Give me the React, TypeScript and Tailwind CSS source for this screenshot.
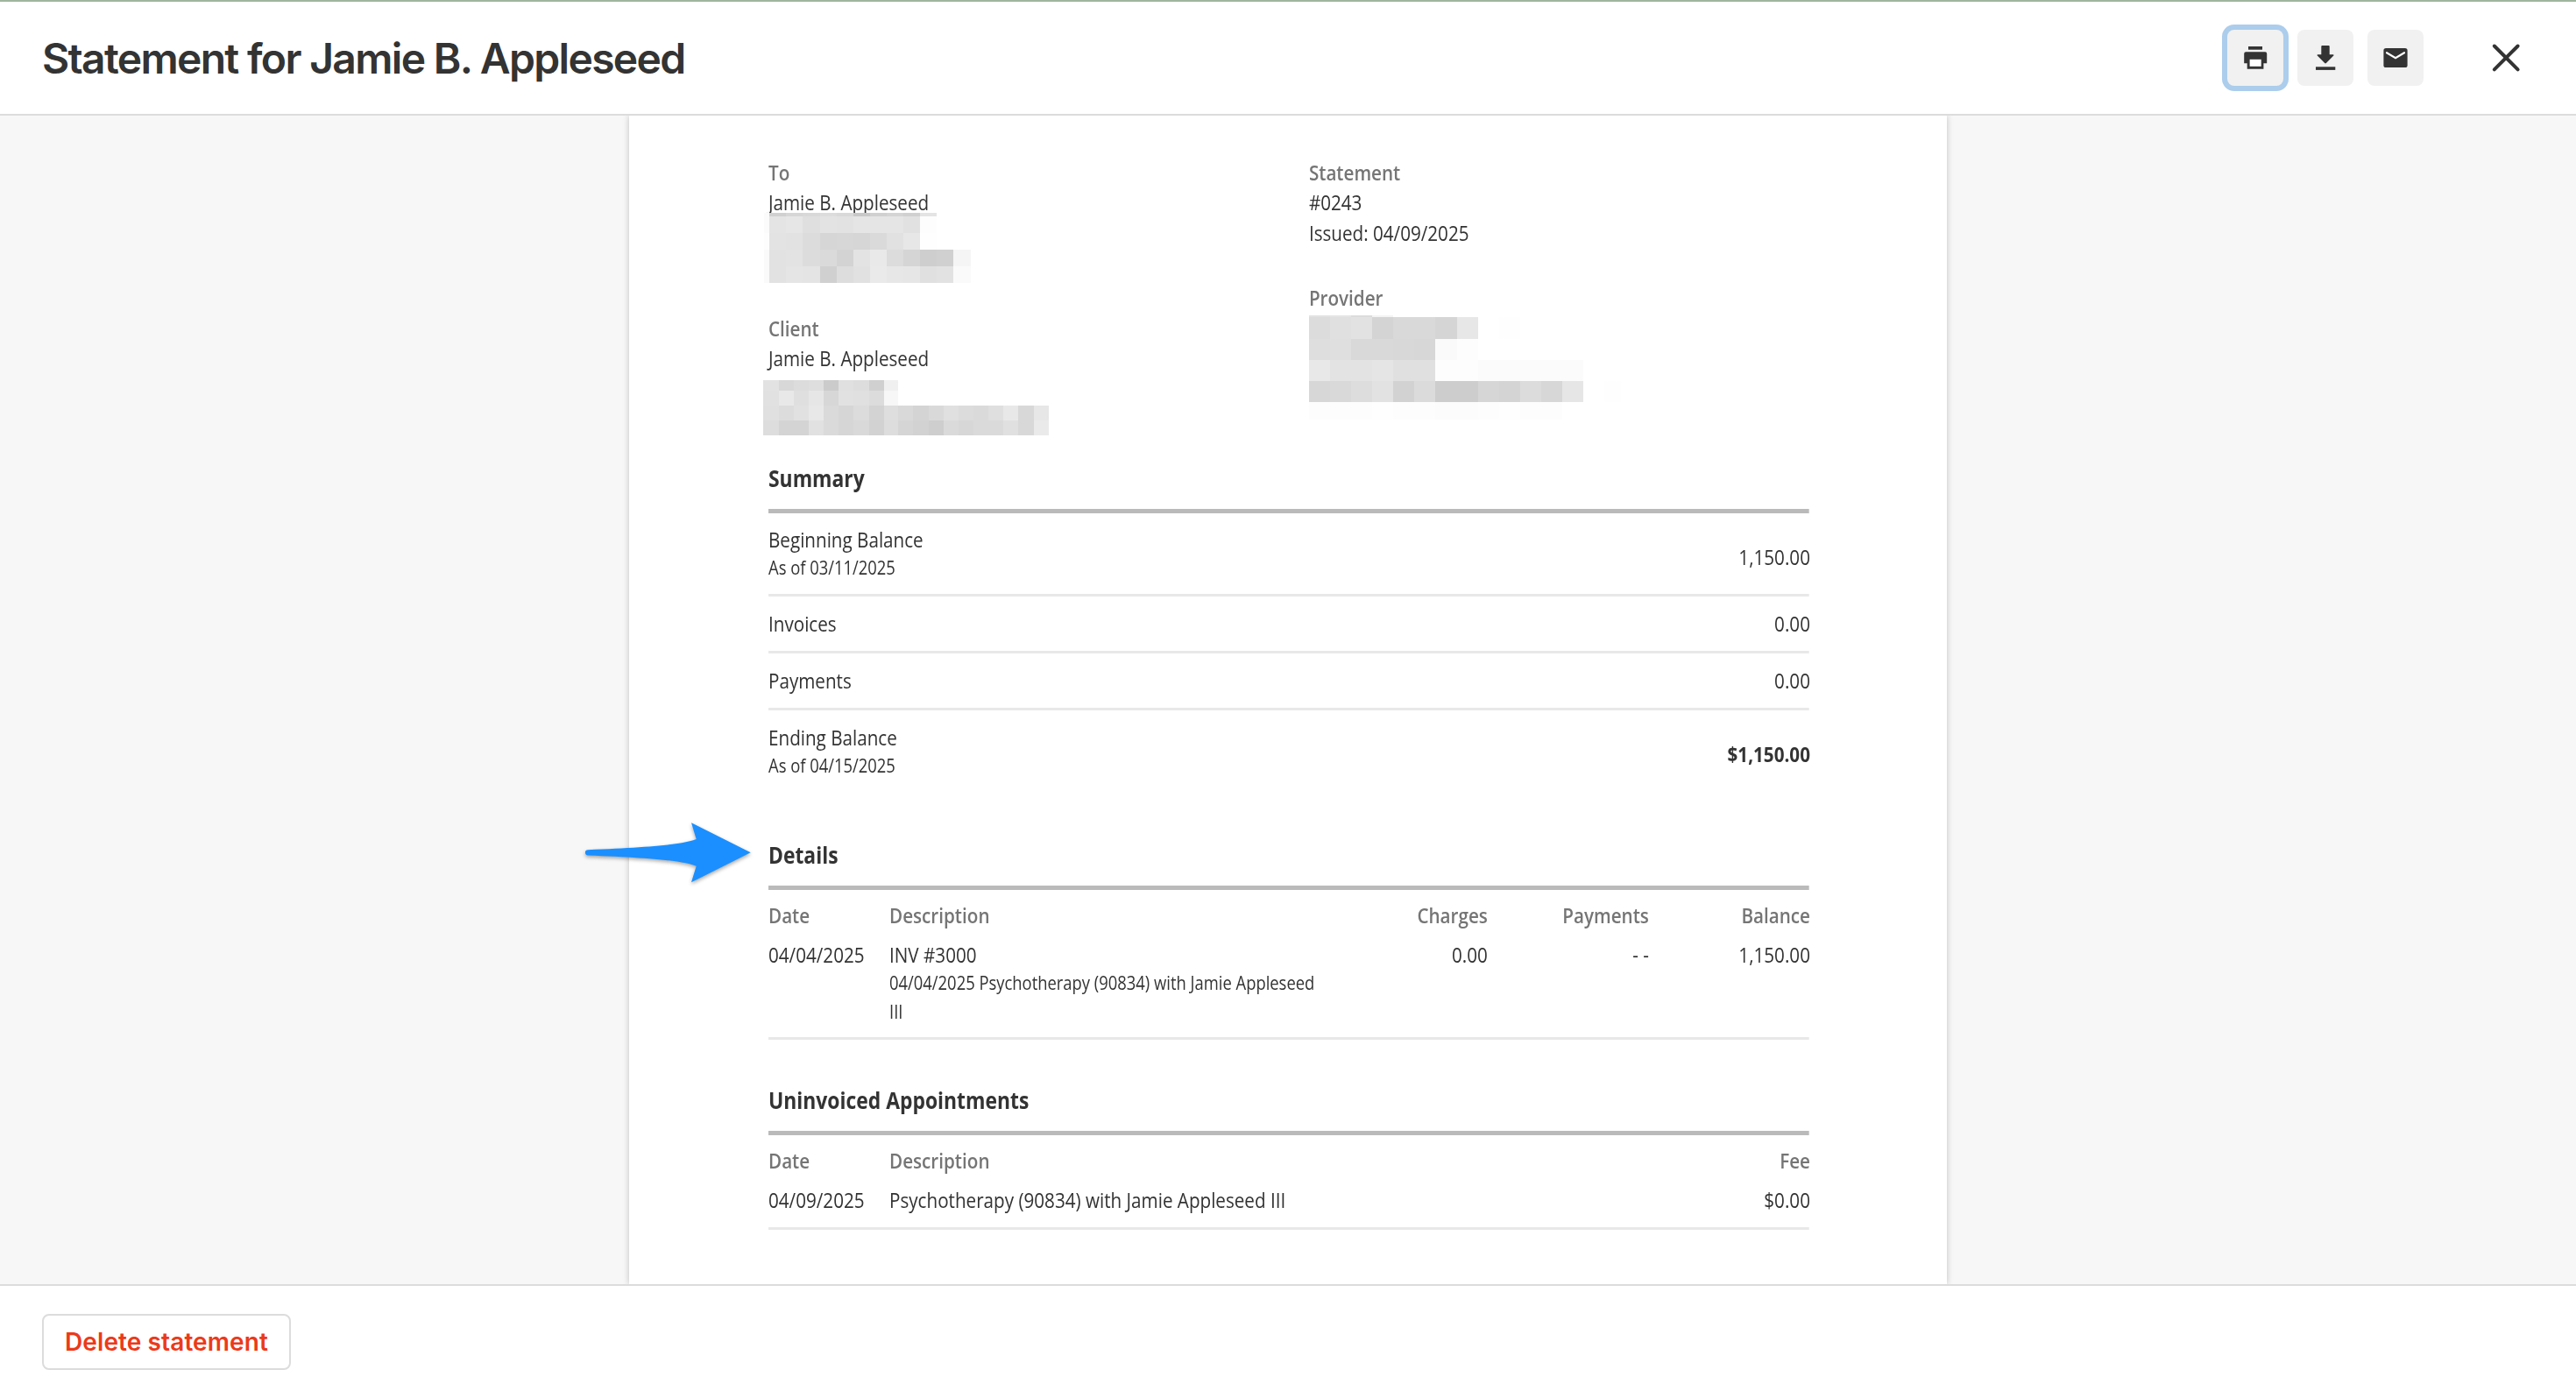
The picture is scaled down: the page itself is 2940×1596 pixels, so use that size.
type MosaicProps = {
    x: number[];
    y: number[];
    rows: string[];
    className: string;
};

// Each row is a list of two-digit grey levels, ".." leaves the cell empty
const Mosaic: React.FC<MosaicProps> = ({ x, y, rows, className }) => {
    const width = x[x.length - 1] - x[0];
    const height = y[y.length - 1] - y[0];

    return (
        <svg className={className} width={width} height={height} shapeRendering="crispEdges">
            {rows.map((row, r) =>
                row.split(' ').map((g, c) =>
                    g === '..' ? null : (
                        <rect
                            key={`${r}-${c}`}
                            x={x[c] - x[0]}
                            y={y[r] - y[0]}
                            width={x[c + 1] - x[c]}
                            height={y[r + 1] - y[r]}
                            fill={`#${g}${g}${g}`}
                        />
                    )
                )
            )}
        </svg>
    );
};

const PrintIcon: React.FC = () => (
    <svg width="64" height="64" viewBox="0 0 64 64" fill="#333">
        <rect x="24" y="19" width="16" height="3.7" />
        <path d="M21.3 25.3h21.9a2 2 0 0 1 2 2v11h-3.8v6.4H22.7v-6.4h-3.5v-11a2 2 0 0 1 2-2z" />
        <rect x="25.6" y="33.8" width="13.1" height="8" fill="#fff" />
    </svg>
);

const DownloadIcon: React.FC = () => (
    <svg width="64" height="64" viewBox="0 0 64 64" fill="#333">
        <path d="M28.3 18h7.4a1 1 0 0 1 1 1v9.2h4a.8.8 0 0 1 .6 1.4l-8.4 8.4a1.2 1.2 0 0 1-1.7 0l-8.4-8.4a.8.8 0 0 1 .5-1.4h4V19a1 1 0 0 1 1-1z" />
        <rect x="21" y="42.3" width="22.3" height="3.6" />
    </svg>
);

const MailIcon: React.FC = () => (
    <svg width="64" height="64" viewBox="0 0 64 64">
        <rect x="18.4" y="21.1" width="27.2" height="22" rx="2.7" fill="#333" />
        <path d="M22 26.2l10 5.9 10-5.9" fill="none" stroke="#fff" strokeWidth="2.2" strokeLinecap="round" />
    </svg>
);

const CloseIcon: React.FC = () => (
    <svg width="64" height="64" viewBox="0 0 64 64" stroke="#333" strokeWidth="4" strokeLinecap="round">
        <path d="M18.8 18.5l26.8 26.8M45.6 18.5L18.8 45.3" />
    </svg>
);

const Header: React.FC = () => (
    <header className="h-[132px] shrink-0 flex items-center justify-between border-t-2 border-t-[#a0b59f] border-b-2 border-b-[#dcdcdc] bg-white pl-12 pr-12">
        <h1 className="pt-0.5 font-[Inter,sans-serif] text-[48px] font-semibold tracking-[-1.68px] text-[#333]">
            Statement for Jamie B. Appleseed
        </h1>
        <div className="flex items-center gap-4">
            <button className="size-16 rounded-lg bg-[#f1f1f1] ring-6 ring-[#accdec]">
                <PrintIcon />
            </button>
            <button className="size-16 rounded-lg bg-[#f1f1f1]">
                <DownloadIcon />
            </button>
            <button className="size-16 rounded-lg bg-[#f1f1f1]">
                <MailIcon />
            </button>
            <button className="size-16 ml-[46px]">
                <CloseIcon />
            </button>
        </div>
    </header>
);

const Label: React.FC<{ children: React.ReactNode }> = ({ children }) => (
    <p className="font-semibold text-[#757575]">{children}</p>
);

const SectionTitle: React.FC<{ children: React.ReactNode }> = ({ children }) => (
    <>
        <h2 className="text-[26.6px] leading-[38px] font-bold">{children}</h2>
        <div className="mt-[16.2px] mr-0.5 h-[5px] bg-[#bababa]" />
    </>
);

const Rule: React.FC = () => <div className="mr-0.5 h-[3px] bg-[#e8e8e8]" />;

const Small: React.FC<{ children: React.ReactNode }> = ({ children }) => (
    <p className="mt-[-1.2px] text-[21.4px] leading-[32.6px]">{children}</p>
);

const Summary: React.FC = () => (
    <section className="mt-[31.4px]">
        <SectionTitle>Summary</SectionTitle>
        <div className="h-[92px] pt-[12.6px] flex justify-between">
            <div>
                <p>Beginning Balance</p>
                <Small>As of 03/11/2025</Small>
            </div>
            <p className="pt-[19.8px]">1,150.00</p>
        </div>
        <Rule />
        <div className="h-[62px] pt-[13.2px] flex justify-between">
            <p>Invoices</p>
            <p>0.00</p>
        </div>
        <Rule />
        <div className="h-[62px] pt-[13.2px] flex justify-between">
            <p>Payments</p>
            <p>0.00</p>
        </div>
        <Rule />
        <div className="h-[81px] pt-[13.2px] flex justify-between">
            <div>
                <p>Ending Balance</p>
                <Small>As of 04/15/2025</Small>
            </div>
            <p className="pt-[19.8px] font-bold">$1,150.00</p>
        </div>
    </section>
);

const Details: React.FC = () => (
    <section className="mt-[64.8px]">
        <SectionTitle>Details</SectionTitle>
        <div className="mt-3 grid grid-cols-[160.5px_565px_1fr_214px_214px]">
            <Label>Date</Label>
            <Label>Description</Label>
            <div className="text-right"><Label>Charges</Label></div>
            <div className="text-right"><Label>Payments</Label></div>
            <div className="text-right"><Label>Balance</Label></div>
        </div>
        <div className="mt-[10.2px] mb-[12.6px] grid grid-cols-[160.5px_565px_1fr_214px_214px]">
            <p>04/04/2025</p>
            <div>
                <p>INV #3000</p>
                <Small>04/04/2025 Psychotherapy (90834) with Jamie Appleseed III</Small>
            </div>
            <p className="text-right">0.00</p>
            <p className="text-right">- -</p>
            <p className="text-right">1,150.00</p>
        </div>
        <Rule />
    </section>
);

const Uninvoiced: React.FC = () => (
    <section className="mt-[50px]">
        <SectionTitle>Uninvoiced Appointments</SectionTitle>
        <div className="mt-3 grid grid-cols-[160.5px_1fr_214px]">
            <Label>Date</Label>
            <Label>Description</Label>
            <div className="text-right"><Label>Fee</Label></div>
        </div>
        <div className="mt-[9.8px] mb-[13.5px] grid grid-cols-[160.5px_1fr_214px]">
            <p>04/09/2025</p>
            <p>Psychotherapy (90834) with Jamie Appleseed III</p>
            <p className="text-right">$0.00</p>
        </div>
        <Rule />
    </section>
);

// The statement is set in a slightly condensed face, so the sheet is scaled horizontally
const Document: React.FC = () => (
    <div className="w-[1382.5px] origin-left scale-x-[0.86] font-['Open_Sans',sans-serif] text-[24px] leading-[34.5px] text-[#333]">
        <div className="grid grid-cols-[717.3px_1fr]">
            <div className="flex flex-col gap-10">
                <div className="h-[138px]">
                    <Label>To</Label>
                    <p>Jamie B. Appleseed</p>
                </div>
                <div className="h-[138px]">
                    <Label>Client</Label>
                    <p>Jamie B. Appleseed</p>
                </div>
            </div>
            <div className="flex flex-col gap-10">
                <div>
                    <Label>Statement</Label>
                    <p>#0243</p>
                    <p>Issued: 04/09/2025</p>
                </div>
                <Label>Provider</Label>
            </div>
        </div>
        <Summary />
        <Details />
        <Uninvoiced />
    </div>
);

const Arrow: React.FC = () => (
    <svg
        className="absolute left-[-58px] top-[798px] overflow-visible drop-shadow-[0_2px_2px_rgba(0,0,0,0.35)]"
        width="200"
        height="84"
        viewBox="660 930 200 84"
        fill="#1b8fff"
    >
        <path d="M856.7 973.3L789 939.3L794.7 957.9C775 965 735 967.5 671 970.2A3.1 3.1 0 0 0 671 976.4C735 979 775 981.5 794.7 988.8L789 1007.3Z" />
    </svg>
);

export default function App() {
    return (
        <div className="flex h-screen w-full flex-col overflow-hidden bg-white">
            <Header />
            <main className="flex-1 min-h-0 flex bg-[#f7f7f7] pl-[718px]">
                <div className="relative w-[1504px] h-full pt-[47.8px] pl-[158.8px] bg-white shadow-[0_0_7px_rgba(0,0,0,0.22)] [clip-path:inset(0_-80px)]">
                    <Document />
                    <Mosaic
                        className="absolute left-[154px] top-[111px]"
                        x={[872, 878, 897, 916, 936, 955, 974, 993, 1012, 1031, 1050, 1069, 1088, 1108]}
                        y={[243, 247, 266, 285, 304, 323]}
                        rows={[
                            'fb d0 d6 d8 dc d9 c8 d0 d4 d0 e4',
                            'fb e4 e6 df e3 e2 e5 e5 e5 e1 fd',
                            'fd e3 e2 dc d6 d7 d6 da e1 e7 fe',
                            'fa e2 e3 dc da d3 e3 e9 dc d5 ce d0 f5',
                            'fa e2 e5 e4 d0 dd e1 ea e7 e6 e0 e2 fa',
                        ]}
                    />
                    <Mosaic
                        className="absolute left-[153px] top-[302px]"
                        x={[871, 889, 906, 923, 940, 957, 974, 992, 1009, 1025, 1042, 1060, 1077, 1094, 1111, 1128, 1145, 1162, 1180, 1197]}
                        y={[434, 446, 463, 480, 497]}
                        rows={[
                            'e2 d8 dc de cb e0 dd d0 f0',
                            'e1 e8 df e6 d7 e1 e0 dc f7',
                            'e0 dc e1 e8 da d6 dc d3 de d9 d4 d9 e0 dc da df e8 d8 e7',
                            'dd d4 d4 e1 da d6 d9 d2 dd d5 d2 ce da d7 da da e0 d8 ea',
                        ]}
                    />
                    <Mosaic
                        className="absolute left-[776px] top-[228px]"
                        x={[1494, 1518, 1542, 1566, 1590, 1614, 1638, 1663, 1687, 1711, 1735, 1759, 1783, 1807, 1831, 1850]}
                        y={[360, 362, 387, 411, 435, 459, 479]}
                        rows={[
                            'e2 e5 dc f4',
                            'dc e0 e2 d4 d9 d9 d5 e7 .. fe',
                            'de df d9 d9 d8 d7 fa fd',
                            'e8 e3 e3 e5 e0 e0 fd fd fb fb fb fb fb',
                            'd7 d9 dd e2 d2 db cd cd d6 d4 dc d7 e6 .. fe',
                            'fd fd fd fe fd fd fc fc fd fe fd fd',
                        ]}
                    />
                    <Arrow />
                </div>
            </main>
            <footer className="h-[130px] shrink-0 border-t-2 border-[#dcdcdc] bg-white pl-12 pt-8">
                <button className="h-16 w-[284px] rounded-lg border-2 border-[#dcdcdc] font-[Inter,sans-serif] text-[28px] leading-[60px] font-semibold tracking-[0.1px] text-[#eb3a1a]">
                    Delete statement
                </button>
            </footer>
        </div>
    );
}
